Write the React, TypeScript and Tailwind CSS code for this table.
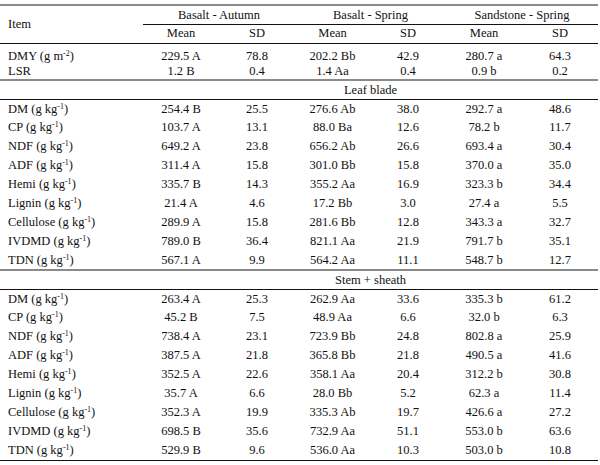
import React from "react"

type Row = { label: string; unit: "m2" | "kg" | null; v: string[] }

const top: Row[] = [
  { label: "DMY", unit: "m2", v: ["229.5 A", "78.8", "202.2 Bb", "42.9", "280.7 a", "64.3"] },
  { label: "LSR", unit: null, v: ["1.2 B", "0.4", "1.4 Aa", "0.4", "0.9 b", "0.2"] },
]

const leaf: Row[] = [
  { label: "DM", unit: "kg", v: ["254.4 B", "25.5", "276.6 Ab", "38.0", "292.7 a", "48.6"] },
  { label: "CP", unit: "kg", v: ["103.7 A", "13.1", "88.0 Ba", "12.6", "78.2 b", "11.7"] },
  { label: "NDF", unit: "kg", v: ["649.2 A", "23.8", "656.2 Ab", "26.6", "693.4 a", "30.4"] },
  { label: "ADF", unit: "kg", v: ["311.4 A", "15.8", "301.0 Bb", "15.8", "370.0 a", "35.0"] },
  { label: "Hemi", unit: "kg", v: ["335.7 B", "14.3", "355.2 Aa", "16.9", "323.3 b", "34.4"] },
  { label: "Lignin", unit: "kg", v: ["21.4 A", "4.6", "17.2 Bb", "3.0", "27.4 a", "5.5"] },
  { label: "Cellulose", unit: "kg", v: ["289.9 A", "15.8", "281.6 Bb", "12.8", "343.3 a", "32.7"] },
  { label: "IVDMD", unit: "kg", v: ["789.0 B", "36.4", "821.1 Aa", "21.9", "791.7 b", "35.1"] },
  { label: "TDN", unit: "kg", v: ["567.1 A", "9.9", "564.2 Aa", "11.1", "548.7 b", "12.7"] },
]

const stem: Row[] = [
  { label: "DM", unit: "kg", v: ["263.4 A", "25.3", "262.9 Aa", "33.6", "335.3 b", "61.2"] },
  { label: "CP", unit: "kg", v: ["45.2 B", "7.5", "48.9 Aa", "6.6", "32.0 b", "6.3"] },
  { label: "NDF", unit: "kg", v: ["738.4 A", "23.1", "723.9 Bb", "24.8", "802.8 a", "25.9"] },
  { label: "ADF", unit: "kg", v: ["387.5 A", "21.8", "365.8 Bb", "21.8", "490.5 a", "41.6"] },
  { label: "Hemi", unit: "kg", v: ["352.5 A", "22.6", "358.1 Aa", "20.4", "312.2 b", "30.8"] },
  { label: "Lignin", unit: "kg", v: ["35.7 A", "6.6", "28.0 Bb", "5.2", "62.3 a", "11.4"] },
  { label: "Cellulose", unit: "kg", v: ["352.3 A", "19.9", "335.3 Ab", "19.7", "426.6 a", "27.2"] },
  { label: "IVDMD", unit: "kg", v: ["698.5 B", "35.6", "732.9 Aa", "51.1", "553.0 b", "63.6"] },
  { label: "TDN", unit: "kg", v: ["529.9 B", "9.6", "536.0 Aa", "10.3", "503.0 b", "10.8"] },
]

function Label({ row }: { row: Row }) {
  if (row.unit === "m2")
    return (
      <>
        {row.label} (g m<sup className="text-[8px]">-2</sup>)
      </>
    )
  if (row.unit === "kg")
    return (
      <>
        {row.label} (g kg<sup className="text-[8px]">-1</sup>)
      </>
    )
  return <>{row.label}</>
}

function DataRow({ row, h = "h-[19px]", last = false }: { row: Row; h?: string; last?: boolean }) {
  const b = last ? "border-b border-[#111]" : ""
  return (
    <tr className={h}>
      <td className={`pl-2 text-left ${b}`}>
        <Label row={row} />
      </td>
      {row.v.map((x, i) => (
        <td key={i} className={`text-center ${b}`}>
          {x}
        </td>
      ))}
    </tr>
  )
}

function Section({ title }: { title: string }) {
  return (
    <tr className="h-[19px]">
      <td colSpan={3} className="border-t-2 border-b border-t-[#8a8a8a] border-b-[#111]" />
      <td colSpan={2} className="border-t-2 border-b border-t-[#8a8a8a] border-b-[#111] text-center">
        {title}
      </td>
      <td colSpan={2} className="border-t-2 border-b border-t-[#8a8a8a] border-b-[#111]" />
    </tr>
  )
}

export default function App() {
  return (
    <div className="w-[600px] h-[465px] bg-white pt-1 text-[#111] text-[12.5px] leading-none font-['Liberation_Serif','Times_New_Roman',serif]">
      <table className="w-[598px] border-collapse table-fixed">
        <colgroup>
          <col className="w-[143px]" />
          <col className="w-[76px]" />
          <col className="w-[76px]" />
          <col className="w-[75px]" />
          <col className="w-[76px]" />
          <col className="w-[76px]" />
          <col className="w-[76px]" />
        </colgroup>
        <thead>
          <tr className="h-[19px]">
            <th rowSpan={2} className="pl-2 text-left font-normal border-t-2 border-t-[#8a8a8a] border-b border-b-[#111]">
              Item
            </th>
            <th colSpan={2} className="font-normal border-t-2 border-t-[#8a8a8a] border-b border-b-[#111]">
              Basalt - Autumn
            </th>
            <th colSpan={2} className="font-normal border-t-2 border-t-[#8a8a8a] border-b border-b-[#111]">
              Basalt - Spring
            </th>
            <th colSpan={2} className="font-normal border-t-2 border-t-[#8a8a8a] border-b border-b-[#111]">
              Sandstone - Spring
            </th>
          </tr>
          <tr className="h-[19px]">
            {["Mean", "SD", "Mean", "SD", "Mean", "SD"].map((x, i) => (
              <th key={i} className="font-normal border-b border-b-[#111]">
                {x}
              </th>
            ))}
          </tr>
        </thead>
        <tbody>
          <tr className="h-[5px]">
            <td colSpan={7} />
          </tr>
          <DataRow row={top[0]} h="h-[16px]" />
          <DataRow row={top[1]} h="h-[16px]" />
          <Section title="Leaf blade" />
          {leaf.map((r) => (
            <DataRow key={r.label} row={r} />
          ))}
          <Section title="Stem + sheath" />
          {stem.map((r, i) => (
            <DataRow key={r.label} row={r} last={i === stem.length - 1} />
          ))}
        </tbody>
      </table>
    </div>
  )
}
